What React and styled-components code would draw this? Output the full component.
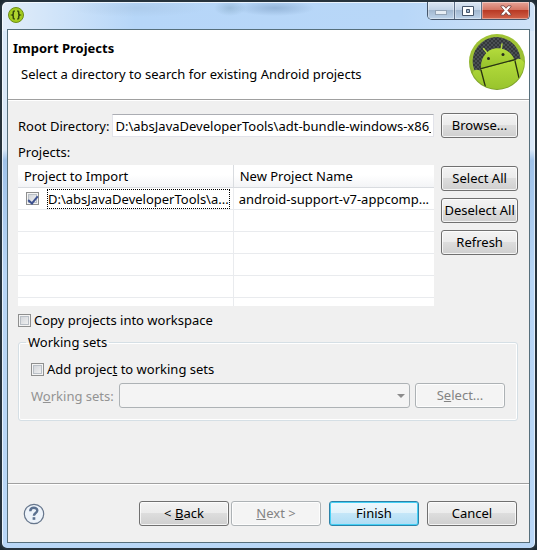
import React, { useState } from 'react';
import styled, { createGlobalStyle, css } from 'styled-components';

const projects = [
    { path: 'D:\\absJavaDeveloperTools\\a...', name: 'android-support-v7-appcomp...' },
];
const emptyRows = ['a', 'b', 'c', 'd', 'e'];

const GlobalStyle = createGlobalStyle`
    * { box-sizing: border-box; }
    body {
        margin: 0;
        background: #1d2a33;
        color: #000;
        font: 13px/18px "Noto Sans", "Open Sans", sans-serif;
    }
    button, input, select { font: inherit; color: inherit; }
`;

const App = () => {
    const [root, setRoot] = useState('D:\\absJavaDeveloperTools\\adt-bundle-windows-x86_64');
    const [checked, setChecked] = useState(true);
    const [copy, setCopy] = useState(false);
    const [addToSets, setAddToSets] = useState(false);

    return (
        <Window>
            <GlobalStyle/>
            <TitleBar>
                <AppIcon/>
                <Caption>
                    <CaptionButton aria-label="Minimize">
                        <svg width="14" height="8" viewBox="0 0 14 8"><rect x="1.5" y="3.5" width="11" height="4" fill="#e6edf4" stroke="#93a3b5"/></svg>
                    </CaptionButton>
                    <CaptionButton aria-label="Maximize">
                        <svg width="12" height="10" viewBox="0 0 12 10"><path d="M.5.5h11v9H.5zM4.500 3.500h3v3h-3z" fill="#fff" fillRule="evenodd" stroke="#45556a"/></svg>
                    </CaptionButton>
                    <CaptionButton $close aria-label="Close">
                        <svg width="12" height="11" viewBox="0 0 12 11"><path d="M1 .8h3L6 3.300 8 .8h3v1L7.800 5.400 11 9v1.200H8L6 7.500l-2 2.700H1V9l3.200-3.600L1 1.800z" fill="#fff" stroke="#6d3936" strokeWidth=".8"/></svg>
                    </CaptionButton>
                </Caption>
            </TitleBar>
            <Client>
                <Header>
                    <div>
                        <Title>Import Projects</Title>
                        <Description>Select a directory to search for existing Android projects</Description>
                    </div>
                    <AndroidLogo/>
                </Header>
                <Body>
                    <RootRow>
                        <RootField>
                            <label htmlFor="root">Root Directory:</label>
                            <TextInput id="root" value={root} onChange={e => setRoot(e.target.value)}/>
                        </RootField>
                        <Button>Browse...</Button>
                    </RootRow>
                    <ListLabel id="projects">Projects:</ListLabel>
                    <ListRow>
                        <Table aria-labelledby="projects">
                            <thead>
                                <tr>
                                    <th>Project to Import</th>
                                    <th>New Project Name</th>
                                </tr>
                            </thead>
                            <tbody>
                                {projects.map(item => (
                                    <tr key={item.name}>
                                        <td>
                                            <ProjectLabel>
                                                <Checkbox checked={checked} onChange={() => setChecked(!checked)}/>
                                                <FocusedText>{item.path}</FocusedText>
                                            </ProjectLabel>
                                        </td>
                                        <td>{item.name}</td>
                                    </tr>
                                ))}
                                {emptyRows.map(key => <tr key={key}><td/><td/></tr>)}
                            </tbody>
                        </Table>
                        <ButtonColumn>
                            <Button>Select All</Button>
                            <Button>Deselect All</Button>
                            <Button>Refresh</Button>
                        </ButtonColumn>
                    </ListRow>
                    <Options>
                        <CheckLabel>
                            <Checkbox checked={copy} onChange={() => setCopy(!copy)}/>
                            Copy projects into workspace
                        </CheckLabel>
                        <Group>
                            <legend>Working sets</legend>
                            <CheckLabel>
                                <Checkbox checked={addToSets} onChange={() => setAddToSets(!addToSets)}/>
                                <span>Add projec<u>t</u> to working sets</span>
                            </CheckLabel>
                            <SetsRow>
                                <DisabledLabel htmlFor="sets">W<u>o</u>rking sets:</DisabledLabel>
                                <SelectBox>
                                    <select id="sets" disabled/>
                                    <svg width="8" height="4" viewBox="0 0 8 4"><path d="M0 0h8L4 4z" fill="#8c8c8c"/></svg>
                                </SelectBox>
                                <Button $wide disabled><span>S<u>e</u>lect...</span></Button>
                            </SetsRow>
                        </Group>
                    </Options>
                </Body>
                <Footer>
                    <HelpButton aria-label="Help"><HelpIcon/></HelpButton>
                    <Pair>
                        <Button $wide><span>&lt; <u>B</u>ack</span></Button>
                        <Button $wide disabled><span><u>N</u>ext &gt;</span></Button>
                    </Pair>
                    <Button $wide $primary>Finish</Button>
                    <Button $wide>Cancel</Button>
                </Footer>
            </Client>
        </Window>
    );
};

const AppIcon = () => (
    <svg width="16" height="16" viewBox="0 0 16 16">
        <circle cx="8" cy="8" r="7.500" fill="#a3cb1d" stroke="#6d8d17"/>
        <circle cx="8" cy="8" r="5" fill="#b0d42f"/>
        <path d="M6.800 4Q5 4 5.300 6q.2 1.500-1 2 1.200.5 1 2-.3 2 1.500 2M9.200 4q1.800 0 1.500 2-.2 1.500 1 2-1.200.5-1 2 .3 2-1.500 2" fill="none" stroke="#34470b" strokeWidth="1.600"/>
    </svg>
);

const AndroidLogo = () => (
    <svg width="56" height="56" viewBox="0 0 56 56">
        <defs>
            <radialGradient id="ring" cx="50%" cy="40%" r="62%">
                <stop offset="0" stopColor="#b4d33c"/>
                <stop offset=".75" stopColor="#9cc034"/>
                <stop offset="1" stopColor="#6f9422"/>
            </radialGradient>
            <linearGradient id="robot" x1="0" y1="0" x2="0" y2="1">
                <stop offset="0" stopColor="#b4dc3c"/>
                <stop offset="1" stopColor="#94c02a"/>
            </linearGradient>
            <pattern id="mesh" width="4" height="4" patternUnits="userSpaceOnUse">
                <rect width="4" height="4" fill="#34383b"/>
                <path d="M0 0h2v2H0zM2 2h2v2H2z" fill="#4b5054"/>
            </pattern>
            <clipPath id="inner"><circle cx="28" cy="28" r="27"/></clipPath>
        </defs>
        <circle cx="28" cy="28" r="28" fill="url(#ring)"/>
        <path d="M5.500 36.500A24 24 0 1 1 51.500 25L28 36z" fill="url(#mesh)"/>
        <g clipPath="url(#inner)">
            <path d="M14.500 14.500l4 5M33 10l-1 6" stroke="#b4d941" strokeWidth="1.500" strokeLinecap="round"/>
            <path d="M12 35C11 24 18 16 25.500 14.500 34 13 42 17 45.500 26z" fill="url(#robot)"/>
            <path d="M12 35l34-9 9 34H18z" fill="url(#robot)"/>
            <path d="M4 38q3-4 7-1l7 23H4zM46 27q2-3 5-2 4 2 6 7v20l-6-3z" fill="url(#robot)"/>
            <path d="M11 34.800L46.500 25.500M12 36l5 19M46 27l4 17" fill="none" stroke="#293411" strokeWidth="1.300"/>
        </g>
        <circle cx="19.500" cy="24.500" r="1.500" fill="#272d1c"/>
        <circle cx="34" cy="20.500" r="1.500" fill="#272d1c"/>
    </svg>
);

const HelpIcon = () => (
    <svg width="22" height="22" viewBox="0 0 22 22">
        <circle cx="11" cy="11" r="9.700" fill="#edf3fa" stroke="#66768c" strokeWidth="1.200"/>
        <path d="M7.300 8.200c0-4.600 7-4.300 7-.6 0 2.600-3.400 2.300-3.400 5.200" fill="none" stroke="#5b7190" strokeWidth="2.400"/>
        <rect x="9.600" y="14.200" width="2.700" height="2.600" fill="#5b7190"/>
    </svg>
);

const Window = styled.div`
    display: flex;
    flex-direction: column;
    min-height: 100vh;
    padding: 0 5px 5px;
    border: 2px solid #26333d;
    border-radius: 7px;
    background:
        radial-gradient(ellipse 70px 9px at 135px 6px, #8fa9c438, transparent),
        radial-gradient(ellipse 16px 8px at 228px 6px, #6f93ad60, transparent),
        radial-gradient(ellipse 40px 8px at 273px 6px, #5d7fa660, transparent),
        linear-gradient(90deg, #e2edf9 0, #d4e6f9 8%, #b6d6f8 25%, #b8d7f8 75%, #cfe2f7 100%) 0 0 / 100% 29px no-repeat,
        linear-gradient(180deg, #d9e8f8 0, #d9e8f8 27%, #9fc2e9 29%, #b7d5f5 50%, #b9d7f7 100%);
    box-shadow: inset 1px 1px 0 #ffffffb0, inset -1px 0 0 #ffffff90;
`;
const TitleBar = styled.header`
    display: flex;
    justify-content: space-between;
    align-items: flex-start;
    height: 27px;

    > svg {
        margin: 5px 0 0 1px;
    }
`;
const Caption = styled.div`
    display: flex;
    border: 1px solid #45566b;
    border-top: 0;
    border-radius: 0 0 5px 5px;
    overflow: hidden;
`;
const CaptionButton = styled.button`
    display: grid;
    place-items: center;
    width: ${({$close}) => $close ? 47 : 27}px;
    height: 17px;
    padding: 0;
    border: 0;
    border-right: ${({$close}) => $close ? '0' : '1px solid #5e7088'};
    background: ${({$close}) => $close
        ? 'linear-gradient(#e6a498, #d47665 45%, #b93a25 50%, #d2634a)'
        : 'linear-gradient(#dce7f3, #c3d3e5 45%, #a2b8d0 50%, #bdd3ea)'};
    box-shadow: inset 0 0 0 1px #ffffff60;
`;
const Client = styled.main`
    display: flex;
    flex-direction: column;
    flex: 1;
    border: 1px solid #566f7c;
    background: #f0f0f0;
`;
const Header = styled.div`
    display: flex;
    justify-content: space-between;
    height: 70px;
    padding: 4px 4px 0 5px;
    border-bottom: 1px solid #a0a0a0;
    background: #fff;
`;
const Title = styled.h1`
    margin: 5px 0 8px;
    font-size: 13px;
    line-height: 18px;
`;
const Description = styled.p`
    margin: 0;
    padding-left: 8px;
`;
const Body = styled.section`
    flex: 1;
    padding: 12px 11px 0 10px;
    border-top: 1px solid #fff;
`;
const RootRow = styled.div`
    display: flex;
    align-items: center;
    gap: 7px;
`;
const RootField = styled.div`
    display: flex;
    flex: 1;
    align-items: center;
    gap: 3px;
    min-width: 0;
`;
const TextInput = styled.input`
    flex: 1;
    min-width: 0;
    height: 23px;
    padding: 0 2px;
    border: 1px solid #e2e3ea;
    border-top-color: #abadb3;
    background: #fff;
`;
const Button = styled.button`
    flex: none;
    width: ${({$wide}) => $wide ? 90 : 77}px;
    height: 25px;
    padding: 0 0 1px;
    border: 1px solid #707070;
    border-radius: 3px;
    background: linear-gradient(#f3f3f3, #ebebeb 48%, #dddddd 50%, #cfcfcf);
    box-shadow: inset 0 0 0 1px #ffffffc0;
    white-space: nowrap;

    ${({$primary}) => $primary && css`
        border-color: #2c82a8;
        background: linear-gradient(#eef8fd, #e0f2fb 48%, #c4e6f8 50%, #aedcf4);
        box-shadow: inset 0 0 0 1px #45d0f5;
    `}

    &:disabled {
        border-color: #adb2b5;
        background: #f4f4f4;
        color: #838383;
    }
`;
const ListLabel = styled.div`
    margin: 5px 0 4px;
`;
const ListRow = styled.div`
    display: flex;
    align-items: flex-start;
    gap: 7px;
`;
const Table = styled.table`
    flex: 1;
    min-width: 0;
    table-layout: fixed;
    border-collapse: separate;
    border-spacing: 0;
    background: #fff;

    th, td {
        height: 22px;
        padding: 0 5px;
        border-right: 1px solid #e9ebee;
        border-bottom: 1px solid #e9ebee;
        line-height: 18px;
        text-align: left;
        white-space: nowrap;
        overflow: hidden;
    }
    th {
        height: 23px;
        padding: 0 6px;
        border-color: #d9dce0;
        background: linear-gradient(#fff 45%, #f3f4f6);
        font-weight: 400;
    }
    th:first-child {
        width: 218px;
    }
    td:first-child {
        padding-right: 3px;
    }
    th:last-child, td:last-child {
        border-right: 0;
    }
    tr:last-child td {
        height: 8px;
        border-bottom: 0;
    }
`;
const ProjectLabel = styled.label`
    display: flex;
    align-items: center;
    gap: 8px;
    padding-left: 3px;
`;
const FocusedText = styled.span`
    flex: 1;
    height: 20px;
    border: 1px dotted #000;
    overflow: hidden;
`;
const ButtonColumn = styled.div`
    display: flex;
    flex-direction: column;
    gap: 7px;
    padding-top: 1px;
`;
const Options = styled.div`
    display: grid;
    gap: 4px;
    margin-top: 5px;
`;
const Checkbox = styled.input.attrs({type: 'checkbox'})`
    appearance: none;
    display: grid;
    place-content: center;
    flex: none;
    width: 13px;
    height: 13px;
    margin: 0;
    border: 1px solid #8e8f8f;
    background: linear-gradient(135deg, #cbcfd5, #f6f6f6);
    box-shadow: inset 0 0 0 1px #f4f4f4, inset 0 0 0 2px #b9bfc6;

    &:checked::after {
        content: '';
        width: 4px;
        height: 8px;
        border: solid #3d5190;
        border-width: 0 2px 2px 0;
        transform: rotate(40deg);
    }
`;
const CheckLabel = styled.label`
    display: flex;
    align-items: center;
    gap: 3px;
`;
const Group = styled.fieldset`
    min-width: 0;
    margin: 0;
    padding: 9px 12px 12px;
    border: 1px solid #d5dfe5;
    border-radius: 3px;
    box-shadow: inset 0 0 0 1px #fff;

    legend {
        margin-left: -5px;
        padding: 0 2px;
    }
`;
const SetsRow = styled.div`
    display: flex;
    align-items: center;
    gap: 5px;
    margin-top: 5px;
`;
const DisabledLabel = styled.label`
    color: #939393;
`;
const SelectBox = styled.div`
    display: grid;
    flex: 1;
    align-items: center;

    select, svg {
        grid-area: 1 / 1;
    }
    select {
        appearance: none;
        width: 100%;
        height: 25px;
        border: 1px solid #adb2b5;
        border-radius: 3px;
        background: #f4f4f4;
        opacity: 1;
    }
    svg {
        justify-self: end;
        margin-right: 5px;
    }
`;
const Footer = styled.footer`
    display: flex;
    align-items: center;
    gap: 8px;
    padding: 17px 12px 16px 15px;
    border-top: 1px solid #a0a0a0;
    box-shadow: inset 0 1px 0 #fff;
`;
const HelpButton = styled.button`
    display: flex;
    margin-right: auto;
    padding: 0;
    border: 0;
    background: none;
`;
const Pair = styled.div`
    display: flex;
    gap: 2px;
`;

export default App;
